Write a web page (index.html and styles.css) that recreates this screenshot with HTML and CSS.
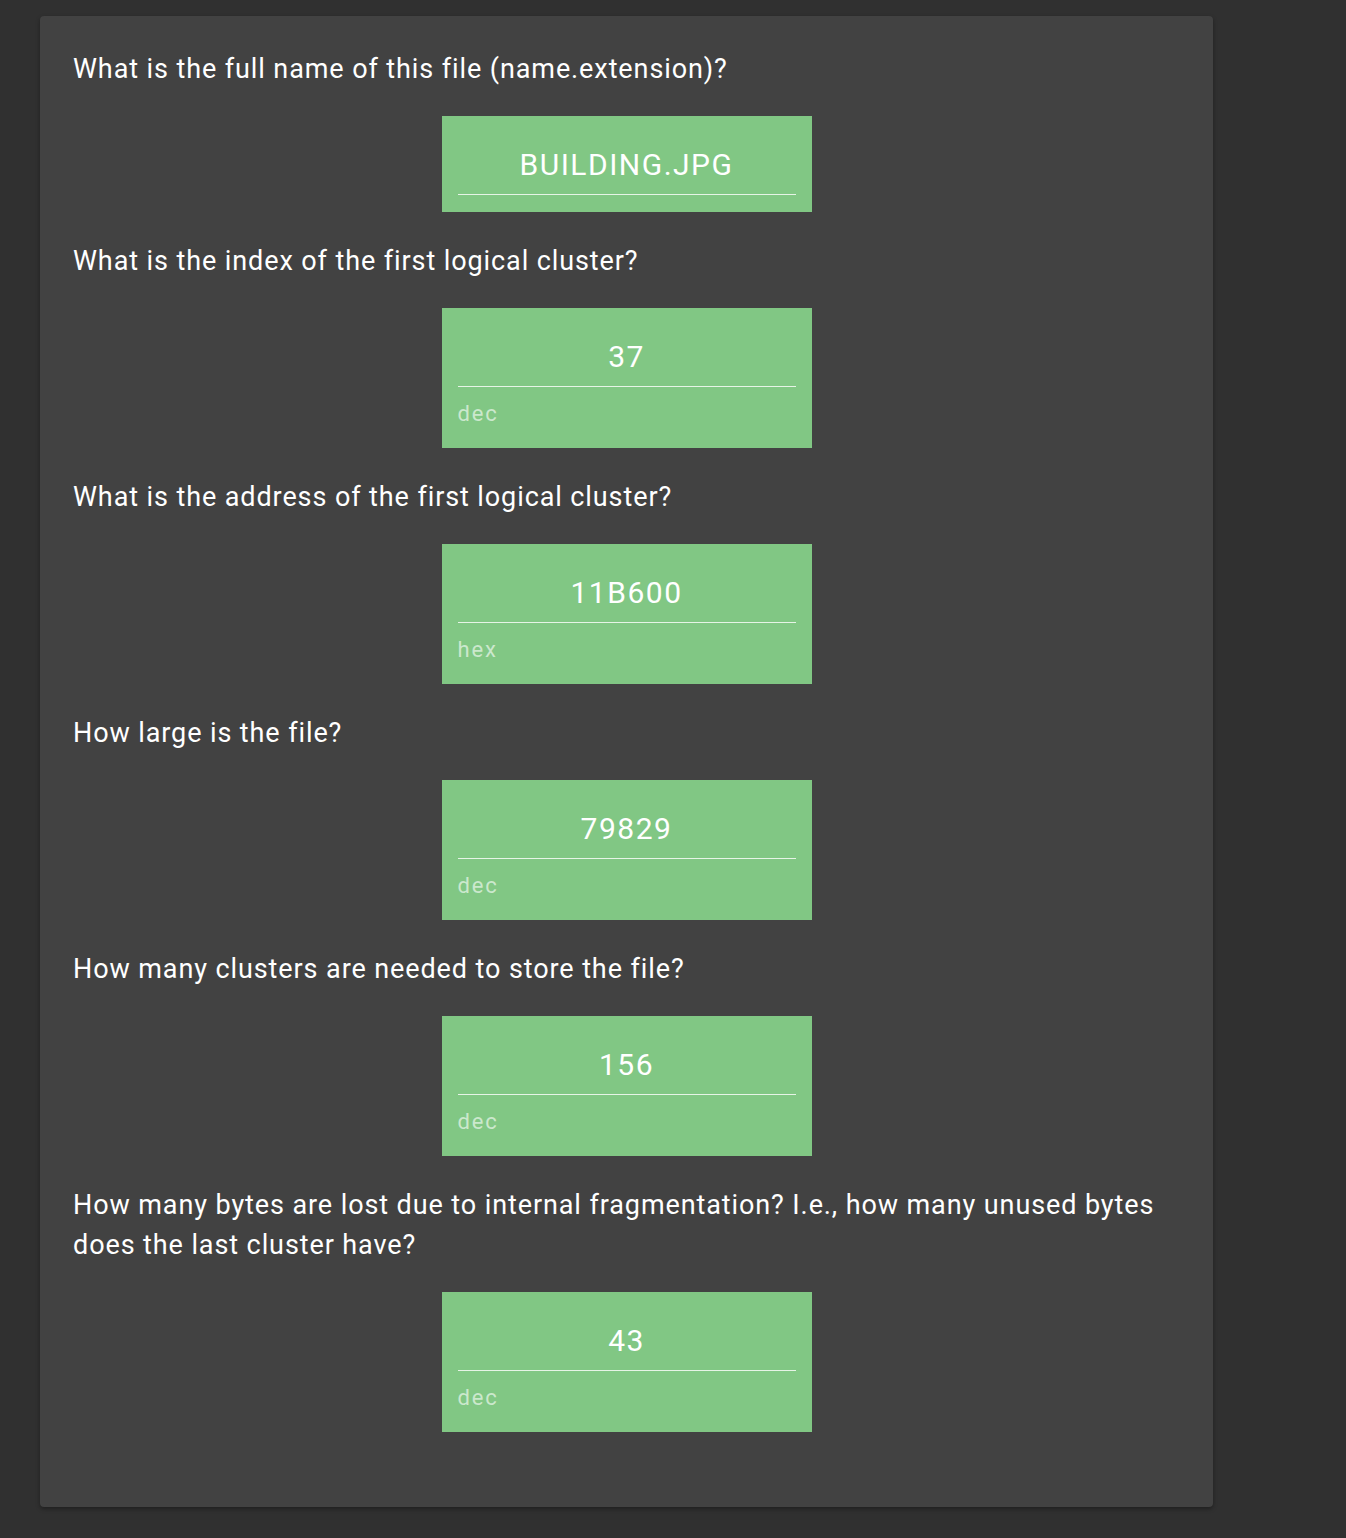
FILE: index.html
```html
<!DOCTYPE html>
<html lang="en">
<head>
<meta charset="utf-8">
<title>File questions</title>
<link rel="stylesheet" href="styles.css">
</head>
<body>
<div class="card">
  <div class="question">What is the full name of this file (name.extension)?</div>
  <div class="answer">
    <div class="value">BUILDING.JPG</div>
  </div>

  <div class="question">What is the index of the first logical cluster?</div>
  <div class="answer">
    <div class="value">37</div>
    <div class="unit">dec</div>
  </div>

  <div class="question">What is the address of the first logical cluster?</div>
  <div class="answer">
    <div class="value">11B600</div>
    <div class="unit">hex</div>
  </div>

  <div class="question">How large is the file?</div>
  <div class="answer">
    <div class="value">79829</div>
    <div class="unit">dec</div>
  </div>

  <div class="question">How many clusters are needed to store the file?</div>
  <div class="answer">
    <div class="value">156</div>
    <div class="unit">dec</div>
  </div>

  <div class="question">How many bytes are lost due to internal fragmentation? I.e., how many unused bytes does the last cluster have?</div>
  <div class="answer">
    <div class="value">43</div>
    <div class="unit">dec</div>
  </div>
</div>
</body>
</html>
```

FILE: styles.css
```css
html, body {
  margin: 0;
  padding: 0;
}
body {
  background: #303030;
  font-family: Roboto, "Liberation Sans", sans-serif;
  color: #ffffff;
  padding: 16px 133px 30px 40px;
}
.card {
  background: #424242;
  border-radius: 4px;
  box-shadow: 0 2px 4px rgba(0,0,0,0.35);
  padding: 28px 33px 75px 33px;
  display: flex;
  flex-direction: column;
}
.question {
  font-size: 27px;
  line-height: 40px;
  letter-spacing: 0.9px;
  margin-top: 5px;
}
.answer {
  align-self: center;
  width: 370px;
  box-sizing: border-box;
  background: #81c784;
  padding: 25px 16px 17px;
  margin: 27px 0 24px;
}
.answer:last-child {
  margin-bottom: 0;
}
.value {
  font-size: 30px;
  line-height: 48px;
  text-align: center;
  padding-bottom: 5px;
  border-bottom: 1px solid rgba(255,255,255,0.8);
  letter-spacing: 1.5px;
}
.unit {
  font-size: 22px;
  line-height: 26px;
  padding-top: 14px;
  padding-bottom: 4px;
  color: rgba(255,255,255,0.6);
  letter-spacing: 1.8px;
}
```
